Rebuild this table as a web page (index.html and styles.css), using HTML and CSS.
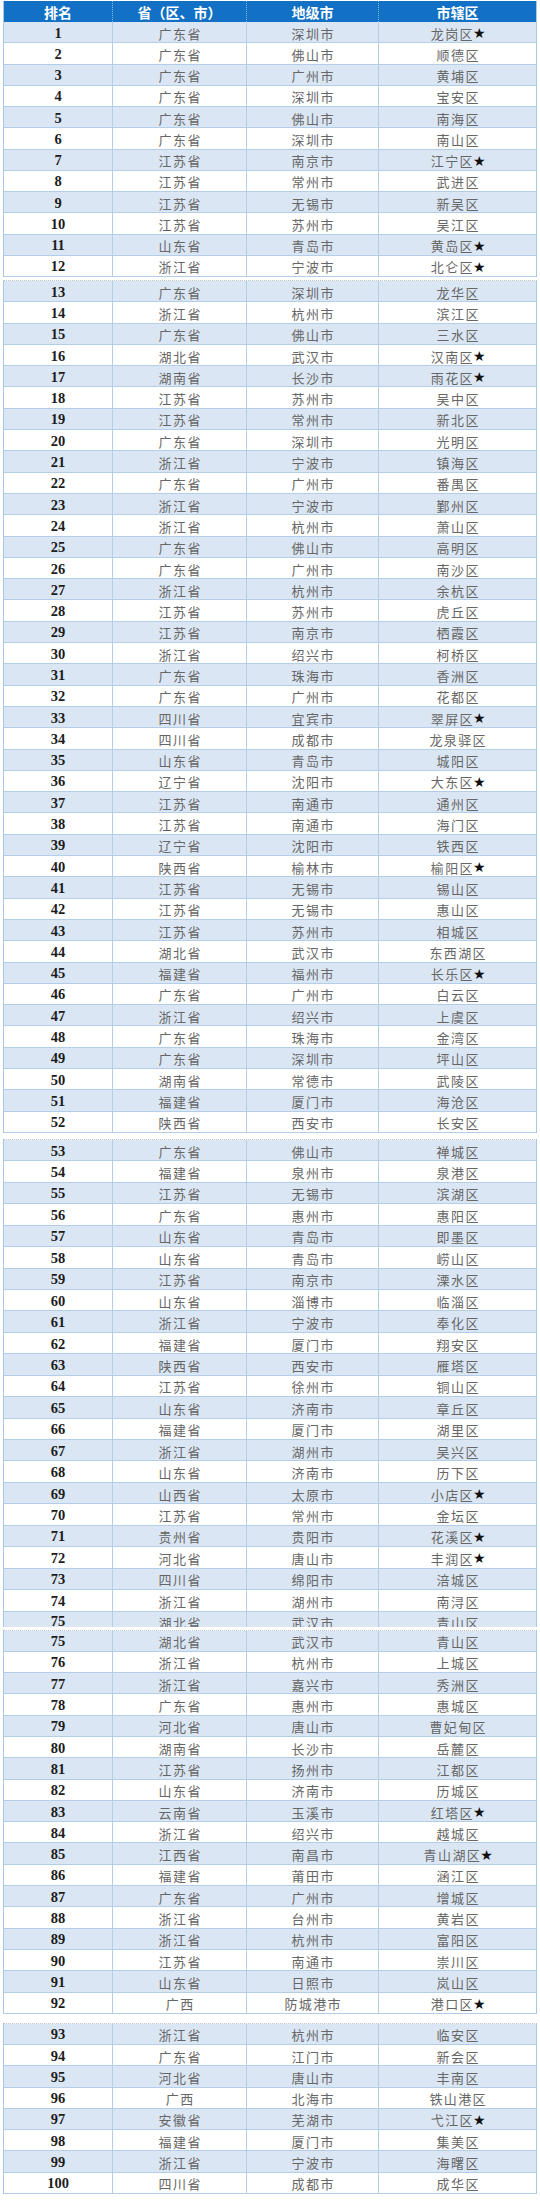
FILE: index.html
```html
<!DOCTYPE html>
<html lang="zh-CN">
<head>
<meta charset="utf-8">
<title>排名</title>
<link rel="stylesheet" href="styles.css">
</head>
<body>
<div class="page">
  <div class="sec s1">
    <div class="hd"><span>排名</span><span>省（区、市）</span><span>地级市</span><span>市辖区</span></div>
    <div class="rows">
      <div class="r"><span>1</span><span>广东省</span><span>深圳市</span><span>龙岗区<em>★</em></span></div>
      <div class="r"><span>2</span><span>广东省</span><span>佛山市</span><span>顺德区</span></div>
      <div class="r"><span>3</span><span>广东省</span><span>广州市</span><span>黄埔区</span></div>
      <div class="r"><span>4</span><span>广东省</span><span>深圳市</span><span>宝安区</span></div>
      <div class="r"><span>5</span><span>广东省</span><span>佛山市</span><span>南海区</span></div>
      <div class="r"><span>6</span><span>广东省</span><span>深圳市</span><span>南山区</span></div>
      <div class="r"><span>7</span><span>江苏省</span><span>南京市</span><span>江宁区<em>★</em></span></div>
      <div class="r"><span>8</span><span>江苏省</span><span>常州市</span><span>武进区</span></div>
      <div class="r"><span>9</span><span>江苏省</span><span>无锡市</span><span>新吴区</span></div>
      <div class="r"><span>10</span><span>江苏省</span><span>苏州市</span><span>吴江区</span></div>
      <div class="r"><span>11</span><span>山东省</span><span>青岛市</span><span>黄岛区<em>★</em></span></div>
      <div class="r"><span>12</span><span>浙江省</span><span>宁波市</span><span>北仑区<em>★</em></span></div>
    </div>
  </div>

  <div class="sec s2">
    <div class="rows">
      <div class="r"><span>13</span><span>广东省</span><span>深圳市</span><span>龙华区</span></div>
      <div class="r"><span>14</span><span>浙江省</span><span>杭州市</span><span>滨江区</span></div>
      <div class="r"><span>15</span><span>广东省</span><span>佛山市</span><span>三水区</span></div>
      <div class="r"><span>16</span><span>湖北省</span><span>武汉市</span><span>汉南区<em>★</em></span></div>
      <div class="r"><span>17</span><span>湖南省</span><span>长沙市</span><span>雨花区<em>★</em></span></div>
      <div class="r"><span>18</span><span>江苏省</span><span>苏州市</span><span>吴中区</span></div>
      <div class="r"><span>19</span><span>江苏省</span><span>常州市</span><span>新北区</span></div>
      <div class="r"><span>20</span><span>广东省</span><span>深圳市</span><span>光明区</span></div>
      <div class="r"><span>21</span><span>浙江省</span><span>宁波市</span><span>镇海区</span></div>
      <div class="r"><span>22</span><span>广东省</span><span>广州市</span><span>番禺区</span></div>
      <div class="r"><span>23</span><span>浙江省</span><span>宁波市</span><span>鄞州区</span></div>
      <div class="r"><span>24</span><span>浙江省</span><span>杭州市</span><span>萧山区</span></div>
      <div class="r"><span>25</span><span>广东省</span><span>佛山市</span><span>高明区</span></div>
      <div class="r"><span>26</span><span>广东省</span><span>广州市</span><span>南沙区</span></div>
      <div class="r"><span>27</span><span>浙江省</span><span>杭州市</span><span>余杭区</span></div>
      <div class="r"><span>28</span><span>江苏省</span><span>苏州市</span><span>虎丘区</span></div>
      <div class="r"><span>29</span><span>江苏省</span><span>南京市</span><span>栖霞区</span></div>
      <div class="r"><span>30</span><span>浙江省</span><span>绍兴市</span><span>柯桥区</span></div>
      <div class="r"><span>31</span><span>广东省</span><span>珠海市</span><span>香洲区</span></div>
      <div class="r"><span>32</span><span>广东省</span><span>广州市</span><span>花都区</span></div>
      <div class="r"><span>33</span><span>四川省</span><span>宜宾市</span><span>翠屏区<em>★</em></span></div>
      <div class="r"><span>34</span><span>四川省</span><span>成都市</span><span>龙泉驿区</span></div>
      <div class="r"><span>35</span><span>山东省</span><span>青岛市</span><span>城阳区</span></div>
      <div class="r"><span>36</span><span>辽宁省</span><span>沈阳市</span><span>大东区<em>★</em></span></div>
      <div class="r"><span>37</span><span>江苏省</span><span>南通市</span><span>通州区</span></div>
      <div class="r"><span>38</span><span>江苏省</span><span>南通市</span><span>海门区</span></div>
      <div class="r"><span>39</span><span>辽宁省</span><span>沈阳市</span><span>铁西区</span></div>
      <div class="r"><span>40</span><span>陕西省</span><span>榆林市</span><span>榆阳区<em>★</em></span></div>
      <div class="r"><span>41</span><span>江苏省</span><span>无锡市</span><span>锡山区</span></div>
      <div class="r"><span>42</span><span>江苏省</span><span>无锡市</span><span>惠山区</span></div>
      <div class="r"><span>43</span><span>江苏省</span><span>苏州市</span><span>相城区</span></div>
      <div class="r"><span>44</span><span>湖北省</span><span>武汉市</span><span>东西湖区</span></div>
      <div class="r"><span>45</span><span>福建省</span><span>福州市</span><span>长乐区<em>★</em></span></div>
      <div class="r"><span>46</span><span>广东省</span><span>广州市</span><span>白云区</span></div>
      <div class="r"><span>47</span><span>浙江省</span><span>绍兴市</span><span>上虞区</span></div>
      <div class="r"><span>48</span><span>广东省</span><span>珠海市</span><span>金湾区</span></div>
      <div class="r"><span>49</span><span>广东省</span><span>深圳市</span><span>坪山区</span></div>
      <div class="r"><span>50</span><span>湖南省</span><span>常德市</span><span>武陵区</span></div>
      <div class="r"><span>51</span><span>福建省</span><span>厦门市</span><span>海沧区</span></div>
      <div class="r"><span>52</span><span>陕西省</span><span>西安市</span><span>长安区</span></div>
    </div>
  </div>

  <div class="sec s3">
    <div class="rows">
      <div class="r"><span>53</span><span>广东省</span><span>佛山市</span><span>禅城区</span></div>
      <div class="r"><span>54</span><span>福建省</span><span>泉州市</span><span>泉港区</span></div>
      <div class="r"><span>55</span><span>江苏省</span><span>无锡市</span><span>滨湖区</span></div>
      <div class="r"><span>56</span><span>广东省</span><span>惠州市</span><span>惠阳区</span></div>
      <div class="r"><span>57</span><span>山东省</span><span>青岛市</span><span>即墨区</span></div>
      <div class="r"><span>58</span><span>山东省</span><span>青岛市</span><span>崂山区</span></div>
      <div class="r"><span>59</span><span>江苏省</span><span>南京市</span><span>溧水区</span></div>
      <div class="r"><span>60</span><span>山东省</span><span>淄博市</span><span>临淄区</span></div>
      <div class="r"><span>61</span><span>浙江省</span><span>宁波市</span><span>奉化区</span></div>
      <div class="r"><span>62</span><span>福建省</span><span>厦门市</span><span>翔安区</span></div>
      <div class="r"><span>63</span><span>陕西省</span><span>西安市</span><span>雁塔区</span></div>
      <div class="r"><span>64</span><span>江苏省</span><span>徐州市</span><span>铜山区</span></div>
      <div class="r"><span>65</span><span>山东省</span><span>济南市</span><span>章丘区</span></div>
      <div class="r"><span>66</span><span>福建省</span><span>厦门市</span><span>湖里区</span></div>
      <div class="r"><span>67</span><span>浙江省</span><span>湖州市</span><span>吴兴区</span></div>
      <div class="r"><span>68</span><span>山东省</span><span>济南市</span><span>历下区</span></div>
      <div class="r"><span>69</span><span>山西省</span><span>太原市</span><span>小店区<em>★</em></span></div>
      <div class="r"><span>70</span><span>江苏省</span><span>常州市</span><span>金坛区</span></div>
      <div class="r"><span>71</span><span>贵州省</span><span>贵阳市</span><span>花溪区<em>★</em></span></div>
      <div class="r"><span>72</span><span>河北省</span><span>唐山市</span><span>丰润区<em>★</em></span></div>
      <div class="r"><span>73</span><span>四川省</span><span>绵阳市</span><span>涪城区</span></div>
      <div class="r"><span>74</span><span>浙江省</span><span>湖州市</span><span>南浔区</span></div>
      <div class="r cut"><span>75</span><span>湖北省</span><span>武汉市</span><span>青山区</span></div>
    </div>
  </div>

  <div class="sec s4">
    <div class="rows">
      <div class="r"><span>75</span><span>湖北省</span><span>武汉市</span><span>青山区</span></div>
      <div class="r"><span>76</span><span>浙江省</span><span>杭州市</span><span>上城区</span></div>
      <div class="r"><span>77</span><span>浙江省</span><span>嘉兴市</span><span>秀洲区</span></div>
      <div class="r"><span>78</span><span>广东省</span><span>惠州市</span><span>惠城区</span></div>
      <div class="r"><span>79</span><span>河北省</span><span>唐山市</span><span>曹妃甸区</span></div>
      <div class="r"><span>80</span><span>湖南省</span><span>长沙市</span><span>岳麓区</span></div>
      <div class="r"><span>81</span><span>江苏省</span><span>扬州市</span><span>江都区</span></div>
      <div class="r"><span>82</span><span>山东省</span><span>济南市</span><span>历城区</span></div>
      <div class="r"><span>83</span><span>云南省</span><span>玉溪市</span><span>红塔区<em>★</em></span></div>
      <div class="r"><span>84</span><span>浙江省</span><span>绍兴市</span><span>越城区</span></div>
      <div class="r"><span>85</span><span>江西省</span><span>南昌市</span><span>青山湖区<em>★</em></span></div>
      <div class="r"><span>86</span><span>福建省</span><span>莆田市</span><span>涵江区</span></div>
      <div class="r"><span>87</span><span>广东省</span><span>广州市</span><span>增城区</span></div>
      <div class="r"><span>88</span><span>浙江省</span><span>台州市</span><span>黄岩区</span></div>
      <div class="r"><span>89</span><span>浙江省</span><span>杭州市</span><span>富阳区</span></div>
      <div class="r"><span>90</span><span>江苏省</span><span>南通市</span><span>崇川区</span></div>
      <div class="r"><span>91</span><span>山东省</span><span>日照市</span><span>岚山区</span></div>
      <div class="r"><span>92</span><span>广西</span><span>防城港市</span><span>港口区<em>★</em></span></div>
    </div>
  </div>

  <div class="sec s5">
    <div class="rows">
      <div class="r"><span>93</span><span>浙江省</span><span>杭州市</span><span>临安区</span></div>
      <div class="r"><span>94</span><span>广东省</span><span>江门市</span><span>新会区</span></div>
      <div class="r"><span>95</span><span>河北省</span><span>唐山市</span><span>丰南区</span></div>
      <div class="r"><span>96</span><span>广西</span><span>北海市</span><span>铁山港区</span></div>
      <div class="r"><span>97</span><span>安徽省</span><span>芜湖市</span><span>弋江区<em>★</em></span></div>
      <div class="r"><span>98</span><span>福建省</span><span>厦门市</span><span>集美区</span></div>
      <div class="r"><span>99</span><span>浙江省</span><span>宁波市</span><span>海曙区</span></div>
      <div class="r"><span>100</span><span>四川省</span><span>成都市</span><span>成华区</span></div>
    </div>
  </div>
</div>
</body>
</html>
```

FILE: styles.css
```css
html, body {
  margin: 0;
  padding: 0;
  background: #ffffff;
}

.page {
  box-sizing: border-box;
  width: 540px;
  padding: 1px 4px 0 3px;
  font-family: "Noto Sans CJK SC", "Noto Sans", sans-serif;
}

.sec {
  box-sizing: border-box;
  width: 534px;
  border-left: 1px solid #a9c6e8;
  border-right: 1px solid #a9c6e8;
}

.s1 { --h: 21.25px; }
.s2 { --h: 21.3px; margin-top: 3px; }
.s3 { --h: 21.45px; margin-top: 6px; }
.s4 { --h: 21.3px; margin-top: 3px; }
.s5 { --h: 21.25px; margin-top: 9px; }

.s2, .s3, .s4, .s5 {
  border-top: 1px dotted #b9c3cf;
}

.hd,
.r {
  display: grid;
  grid-template-columns: 109px 134px 132px 157px;
}

.hd {
  height: 21px;
  background: #1271c4;
  color: #ffffff;
  font-size: 14px;
  font-weight: 700;
}

.hd span {
  display: flex;
  align-items: center;
  justify-content: center;
  border-right: 1px dotted rgba(255, 255, 255, 0.5);
  box-sizing: border-box;
  padding-top: 1px;
}

.hd span:last-child {
  border-right: none;
}

.r {
  box-sizing: border-box;
  height: var(--h);
  border-bottom: 1px solid #b4cde9;
  background: #ffffff;
}

.rows .r:nth-child(odd) {
  background: #dbe6f4;
}

.r span {
  box-sizing: border-box;
  display: flex;
  align-items: center;
  justify-content: center;
  border-right: 1px solid #b4cde9;
  font-size: 13px;
  letter-spacing: 1.4px;
  color: #666666;
  padding-top: 2px;
  padding-left: 1.4px;
  white-space: nowrap;
  overflow: hidden;
}

.r span:last-child {
  border-right: none;
}

.r span:first-child {
  font-family: "Liberation Serif", serif;
  font-weight: 700;
  font-size: 14.5px;
  letter-spacing: 0;
  padding-left: 0;
  color: #1c1c1c;
}

.r em {
  font-style: normal;
  font-family: "DejaVu Sans", sans-serif;
  color: #111111;
  font-size: 14px;
  letter-spacing: 0;
  margin-left: -1px;
}

.r.cut {
  height: 15px;
  border-bottom: none;
}

.r.cut span {
  align-items: flex-start;
  padding-top: 1px;
}
```
